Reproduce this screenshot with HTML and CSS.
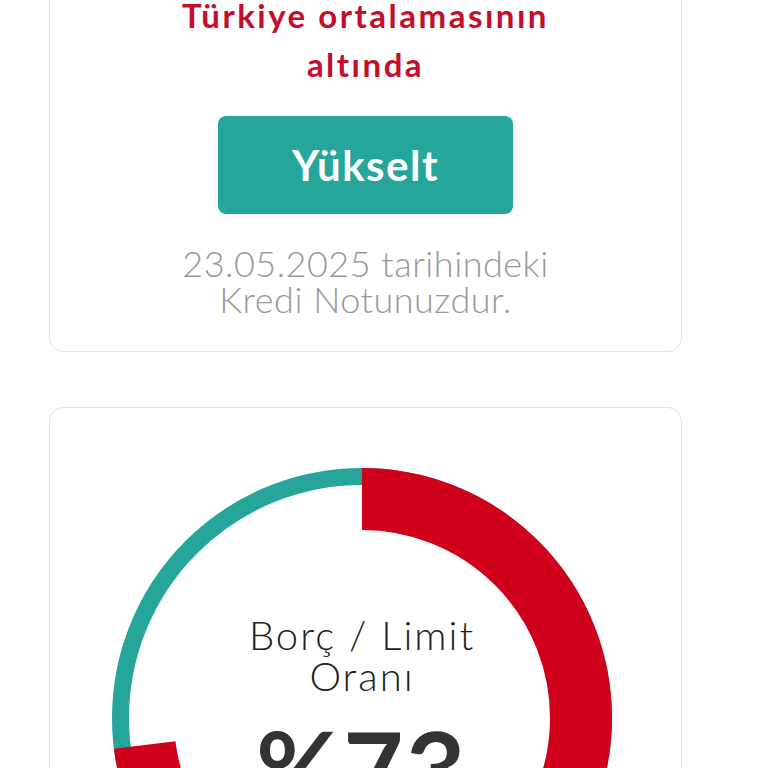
FILE: index.html
```html
<!DOCTYPE html>
<html lang="tr">
<head>
    <meta charset="UTF-8">
    <meta name="viewport" content="width=device-width, initial-scale=1.0">
    <title>Kredi Notu</title>
    <link rel="stylesheet" href="styles.css">
</head>
<body>
    <div class="page">
        <!-- Kredi notu kartı -->
        <div class="card card-score">
            <h2 class="score-note">Türkiye ortalamasının<br>altında</h2>
            <button class="upgrade-btn">Yükselt</button>
            <p class="score-date">23.05.2025 tarihindeki<br>Kredi Notunuzdur.</p>
        </div>

        <!-- Borç / Limit kartı -->
        <div class="card card-ratio">
            <div class="donut">
                <svg class="donut-ring" viewBox="0 0 500 500">
                    <circle cx="250" cy="250" r="241.5" fill="none" stroke="#26a69a" stroke-width="17"/>
                    <circle cx="250" cy="250" r="219" fill="none" stroke="#d0021b" stroke-width="62"
                            stroke-dasharray="1004.5 2000" transform="rotate(-90 250 250)"/>
                </svg>
                <div class="donut-label">Borç / Limit<br>Oranı</div>
                <div class="donut-value">%73</div>
            </div>
        </div>
    </div>
</body>
</html>
```

FILE: styles.css
```css
body {
    margin: 0;
    background-color: #fdfdfd;
    font-family: Lato, "Open Sans", sans-serif;
    overflow: hidden;
}
.page {
    width: 633px;
    margin-left: 49px;
}
.card {
    background-color: #fff;
    border: 1.5px solid #e4e4e4;
    border-radius: 14px;
    text-align: center;
}
.card-score {
    margin-top: -40px;
    padding: 30px 0 34px;
}
.score-note {
    margin: 0;
    color: #c40e2c;
    font-size: 33px;
    font-weight: 700;
    line-height: 49px;
    letter-spacing: 2.5px;
}
.upgrade-btn {
    display: block;
    width: 295px;
    height: 98px;
    margin: 27px auto 0;
    background-color: #26a69a;
    color: #fff;
    border: none;
    border-radius: 8px;
    font-family: inherit;
    font-size: 42px;
    font-weight: 700;
    letter-spacing: 1.5px;
}
.score-date {
    margin: 31px 0 0;
    color: #999;
    font-size: 36px;
    font-weight: 300;
    line-height: 36px;
    letter-spacing: 0.5px;
}
.card-ratio {
    margin-top: 55px;
    padding: 60px 0 40px 62px;
    text-align: left;
}
.donut {
    position: relative;
    width: 500px;
    height: 500px;
    text-align: center;
}
.donut-ring {
    position: absolute;
    top: 0;
    left: 0;
    width: 500px;
    height: 500px;
}
.donut-label {
    position: relative;
    padding-top: 147px;
    color: #222;
    font-size: 40px;
    font-weight: 300;
    line-height: 41px;
    letter-spacing: 2px;
}
.donut-value {
    position: relative;
    margin-top: 18px;
    color: #333;
    font-size: 104px;
    font-weight: 700;
    line-height: 1;
    letter-spacing: 2px;
}
```
